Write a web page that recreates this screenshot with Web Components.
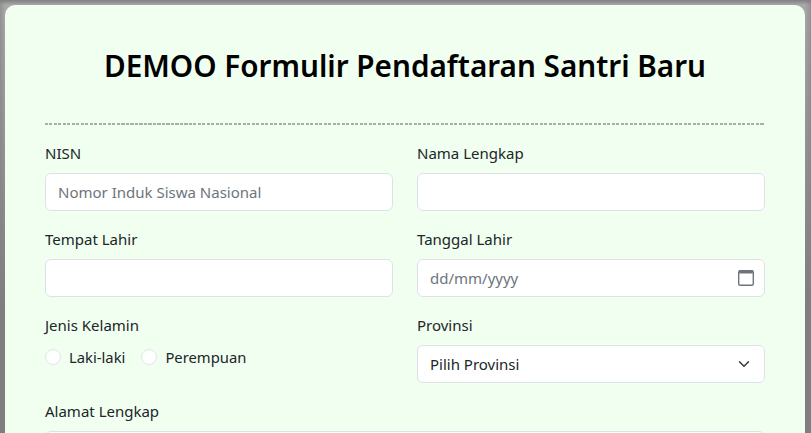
<!DOCTYPE html>
<html>
<head>
<meta charset="utf-8">
<title>Formulir Pendaftaran</title>
<style>
  html, body { margin: 0; height: 100%; overflow: hidden; }
  body {
    background:
      linear-gradient(90deg, rgba(128,128,128,.55), rgba(128,128,128,0) 5px, rgba(128,128,128,0) 805px, rgba(128,128,128,.55) 811px),
      linear-gradient(180deg, #808080 0, #a8a8a8 5px, #7e7e7e 300px);
    font-family: "Noto Sans", "Open Sans", sans-serif;
    color: #212529;
  }
</style>
</head>
<body>
<form-page>
  <form-field label="NISN"><text-box placeholder="Nomor Induk Siswa Nasional"></text-box></form-field>
  <form-field label="Nama Lengkap"><text-box></text-box></form-field>
  <form-field label="Tempat Lahir"><text-box></text-box></form-field>
  <form-field label="Tanggal Lahir"><date-box></date-box></form-field>
  <form-field label="Jenis Kelamin"><radio-row></radio-row></form-field>
  <form-field label="Provinsi"><select-box text="Pilih Provinsi"></select-box></form-field>
  <form-field label="Alamat Lengkap" wide><text-box></text-box></form-field>
</form-page>
<script>
const boxStyle = `
  .box {
    box-sizing: border-box;
    height: 38px;
    background: #fff;
    border: 1px solid #dee2e6;
    border-radius: 6px;
    padding: 0 12px;
    display: flex;
    align-items: center;
    justify-content: space-between;
    font-size: 15px;
    color: #212529;
  }
  .hint { color: #6c757d; }
`;

class FormPage extends HTMLElement {
  constructor(){
    super();
    this.attachShadow({mode: 'open'});
    this.shadowRoot.innerHTML = `
      <style>
        :host { display: block; height: 433px; overflow: hidden; box-sizing: border-box; padding: 5px 6px 0 5px; }
        .card {
          background: #f0fff0;
          border-radius: 10px;
          padding: 40px 40px 0;
          height: 600px;
        }
        h1 {
          margin: 0;
          text-align: center;
          font-size: 29.7px;
          line-height: 42px;
          font-weight: 600;
          color: #000;
        }
        hr {
          margin: 36px 0 0;
          border: 0;
          height: 2px;
          background: repeating-linear-gradient(90deg, #a6b0a6 0 3px, transparent 3px 4.5px);
        }
        .grid {
          margin-top: 16px;
          display: grid;
          grid-template-columns: 1fr 1fr;
          column-gap: 24px;
          row-gap: 16px;
        }
      </style>
      <div class="card">
        <h1>DEMOO Formulir Pendaftaran Santri Baru</h1>
        <hr>
        <div class="grid"><slot></slot></div>
      </div>`;
  }
}

class FormField extends HTMLElement {
  constructor(){
    super();
    this.attachShadow({mode: 'open'});
    this.shadowRoot.innerHTML = `
      <style>
        :host { display: block; min-width: 0; }
        :host([wide]) { grid-column: 1 / -1; }
        label { display: block; font-size: 15px; line-height: 24px; margin-bottom: 8px; color: #212529; }
      </style>
      <label>${this.getAttribute('label')}</label>
      <slot></slot>`;
  }
}

class TextBox extends HTMLElement {
  constructor(){
    super();
    this.attachShadow({mode: 'open'});
    const hint = this.getAttribute('placeholder') || '';
    this.shadowRoot.innerHTML = `
      <style>:host { display: block; } ${boxStyle}</style>
      <div class="box"><span class="hint">${hint}</span></div>`;
  }
}

class DateBox extends HTMLElement {
  constructor(){
    super();
    this.attachShadow({mode: 'open'});
    this.shadowRoot.innerHTML = `
      <style>:host { display: block; } ${boxStyle} svg { display: block; margin-right: -3px; }</style>
      <div class="box">
        <span class="hint">dd/mm/yyyy</span>
        <svg width="18" height="18" viewBox="0 0 18 18" fill="none">
          <rect x="1.7" y="1.7" width="14.6" height="14.6" rx="1.5" stroke="#6c757d" stroke-width="1.4"/>
          <path d="M2.2 1.2h13.6v3.3H2.2z" fill="#6c757d"/>
        </svg>
      </div>`;
  }
}

class SelectBox extends HTMLElement {
  constructor(){
    super();
    this.attachShadow({mode: 'open'});
    this.shadowRoot.innerHTML = `
      <style>:host { display: block; } ${boxStyle}</style>
      <div class="box">
        <span>${this.getAttribute('text')}</span>
        <svg width="16" height="16" viewBox="0 0 16 16" fill="none">
          <path d="M2 5l6 6 6-6" stroke="#343a40" stroke-width="2" stroke-linecap="round" stroke-linejoin="round" transform="translate(2 2) scale(.75)"/>
        </svg>
      </div>`;
  }
}

class RadioRow extends HTMLElement {
  constructor(){
    super();
    this.attachShadow({mode: 'open'});
    this.shadowRoot.innerHTML = `
      <style>
        :host { display: flex; align-items: center; gap: 16px; line-height: 24px; font-size: 14.8px; }
        .opt { display: flex; align-items: center; gap: 8px; }
        i { box-sizing: border-box; width: 16px; height: 16px; border-radius: 50%; background: #fff; border: 1px solid #e2e6e4; }
      </style>
      <div class="opt"><i></i><span>Laki-laki</span></div>
      <div class="opt"><i></i><span>Perempuan</span></div>`;
  }
}

customElements.define('form-page', FormPage);
customElements.define('form-field', FormField);
customElements.define('text-box', TextBox);
customElements.define('date-box', DateBox);
customElements.define('select-box', SelectBox);
customElements.define('radio-row', RadioRow);
</script>
</body>
</html>
